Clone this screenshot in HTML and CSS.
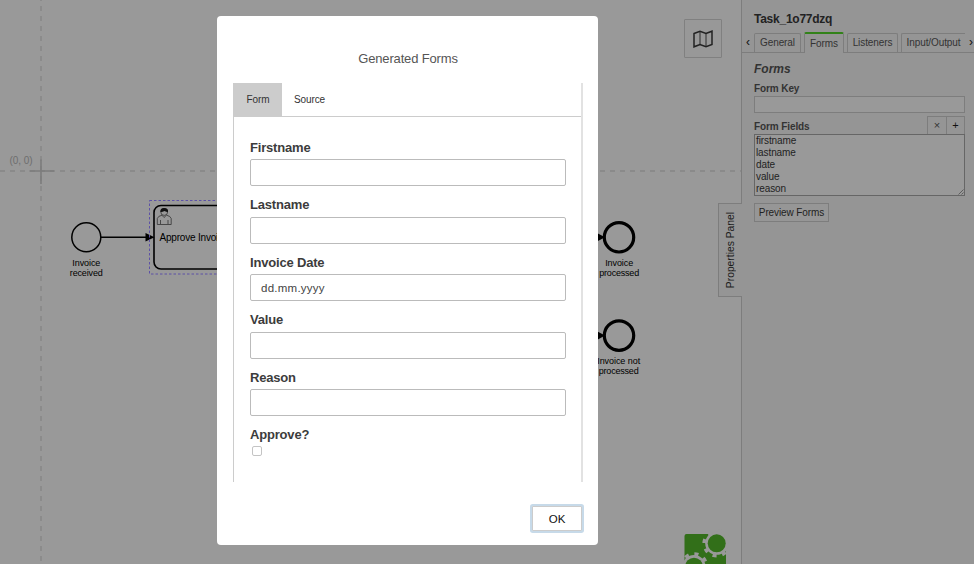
FILE: index.html
```html
<!DOCTYPE html>
<html lang="en">
<head>
<meta charset="utf-8">
<title>Generated Forms</title>
<link rel="stylesheet" href="styles.css">
</head>
<body>
<div class="app">
  <main class="canvas">
    <svg class="diagram" width="741" height="564" viewBox="0 0 741 564">
      <g class="origin">
        <path class="axis" d="M0 171H741" stroke-dasharray="5 5"/>
        <path class="axis" d="M41 0V564" stroke-dasharray="5 5" stroke-dashoffset="4"/>
        <path class="cross" d="M29.500 171H54M41 159.500V184"/>
        <text class="origin-label" x="9.500" y="164" textLength="23">(0, 0)</text>
      </g>
      <circle class="start" cx="86.300" cy="237.300" r="14.500"/>
      <path class="flow" d="M101 237.300H147"/>
      <path class="arrow" d="M145.500 233L154.500 237.300L145.500 241.600Z"/>
      <g class="label">
        <text x="86.300" y="265.500" textLength="28">Invoice</text>
        <text x="86.300" y="275.500" textLength="33">received</text>
      </g>
      <rect class="selection" x="149.500" y="200.500" width="107" height="73.500"/>
      <rect class="task" x="154" y="205.500" width="98" height="63.500" rx="7"/>
      <g class="user">
        <path d="M157.300 224.500V218.500Q158 216 162 215.200L164 217.500L166.500 215.200Q170.500 216 171.200 218.500V224.500ZM160.500 220V224M168 220V224"/>
        <circle cx="164.200" cy="212" r="3.400"/>
        <path class="hair" d="M160.400 212Q160 208 164 208Q168.600 208 168 212Q166 211.800 164.500 211Q162.500 212.200 160.400 212Z"/>
      </g>
      <text class="task-label" x="159.500" y="240.500" textLength="69">Approve Invoice</text>
      <path class="arrow" d="M597 233L605 237.300L597 241.600ZM597 331.300L605 335.600L597 339.900Z"/>
      <circle class="end" cx="619" cy="237.300" r="14.700"/>
      <circle class="end" cx="619" cy="335.600" r="14.700"/>
      <g class="label">
        <text x="619.200" y="265.500" textLength="28">Invoice</text>
        <text x="619.200" y="275.500" textLength="40">processed</text>
        <text x="618.700" y="363.500" textLength="43">Invoice not</text>
        <text x="618.700" y="373.600" textLength="40">processed</text>
      </g>
      <g class="logo">
        <path d="M684.500 536Q684.500 534 686.500 534H708.500V543L716 552L726 551.500V564H684.500Z"/>
        <circle class="gap" cx="716.700" cy="543.300" r="11.500"/>
        <circle class="teeth" cx="716.700" cy="543.300" r="12.300" stroke-dasharray="4 5.660"/>
        <circle class="gap" cx="694" cy="566.500" r="11.500"/>
        <circle class="teeth" cx="694" cy="566.500" r="12.300" stroke-dasharray="4 5.660"/>
        <circle cx="716.700" cy="543.300" r="9"/>
        <circle cx="694" cy="566.500" r="8.800"/>
      </g>
    </svg>
    <button class="minimap">
      <svg width="20" height="18" viewBox="0 0 20 18"><path d="M1 3.500L7 1.200L13 3.500L19 1.200V14.500L13 16.800L7 14.500L1 16.800Z"/><path class="fold" d="M7 1.200V14.500M13 3.500V16.800"/></svg>
    </button>
    <div class="toggle"><span>Properties Panel</span></div>
  </main>
  <aside class="panel">
    <h1>Task_1o77dzq</h1>
    <nav class="tabs">
      <span class="chevron">‹</span>
      <a class="tab general">General</a>
      <a class="tab forms active">Forms</a>
      <a class="tab listeners">Listeners</a>
      <a class="tab io">Input/Output</a>
      <span class="chevron next">›</span>
    </nav>
    <section class="group">
      <h2>Forms</h2>
      <label class="key-label">Form Key</label>
      <div class="key"></div>
      <div class="fields-head"><label>Form Fields</label><span class="tool">×</span><span class="tool plus">+</span></div>
      <div class="fields">
        <div>firstname</div><div>lastname</div><div>date</div><div>value</div><div>reason</div>
        <svg class="grip" width="6" height="6" viewBox="0 0 6 6"><path d="M0.500 5.500L5.500 0.500M3.500 5.500L5.500 3.500"/></svg>
      </div>
      <button class="preview">Preview Forms</button>
    </section>
  </aside>
</div>
<div class="overlay">
  <div class="modal">
    <h3>Generated Forms</h3>
    <div class="content">
      <div class="modal-tabs"><a class="current">Form</a><a>Source</a></div>
      <form>
        <div class="row"><label>Firstname</label><div class="input"></div></div>
        <div class="row"><label>Lastname</label><div class="input"></div></div>
        <div class="row"><label>Invoice Date</label><div class="input">dd.mm.yyyy</div></div>
        <div class="row"><label>Value</label><div class="input"></div></div>
        <div class="row"><label>Reason</label><div class="input"></div></div>
        <div class="row"><label>Approve?</label><div class="check"></div></div>
      </form>
    </div>
    <button class="ok">OK</button>
  </div>
</div>
</body>
</html>
```
FILE: styles.css
```css
* { box-sizing: border-box; }
body { margin: 0; overflow: hidden; font-family: "Liberation Sans", Arial, sans-serif; }
h1, h2, h3 { margin: 0; }
button { font-family: inherit; padding: 0; }

.app { display: flex; width: 974px; height: 564px; background: #999; }
.canvas { position: relative; width: 741px; height: 564px; }
.diagram { display: block; }
.axis { stroke: #858585; stroke-width: 1.4; fill: none; }
.cross { stroke: #7c7c7c; stroke-width: 1.6; fill: none; }
.origin-label { font-size: 10px; fill: #6e6e6e; }
.start { fill: none; stroke: #000; stroke-width: 1.5; }
.end { fill: none; stroke: #000; stroke-width: 3.2; }
.flow { stroke: #000; stroke-width: 1.5; }
.arrow { fill: #000; }
.label { font-size: 9px; fill: #000; text-anchor: middle; }
.selection { fill: none; stroke: #5c51a6; stroke-width: 1; stroke-dasharray: 2.500 2; }
.task { fill: none; stroke: #000; stroke-width: 1.6; }
.task-label { font-size: 10px; }
.user { fill: none; stroke: #333; stroke-width: .8; }
.user .hair { fill: #111; stroke: none; }
.logo { fill: #326f19; }
.logo .gap { fill: #999; }
.logo .teeth { fill: none; stroke: #999; stroke-width: 4; }
.minimap {
  position: absolute; left: 684px; top: 19px; width: 38px; height: 39px;
  display: flex; align-items: center; justify-content: center;
  background: #989898; border: 1px solid #808080; border-radius: 1px;
}
.minimap svg { fill: none; stroke: #222; stroke-width: 1.5; }
.minimap .fold { stroke-width: .9; }
.toggle {
  position: absolute; left: 718px; top: 203px; width: 24px; height: 94px;
  display: flex; align-items: center; justify-content: center;
  background: #959595; border: 1px solid #7d7d7d; border-right: 0;
  font-size: 10.300px; color: #1c1c1c;
}
.toggle span { writing-mode: vertical-rl; transform: rotate(180deg); white-space: nowrap; }

.panel { width: 233px; background: #959595; border-left: 1px solid #7d7d7d; color: #333; overflow: hidden; }
.panel h1 { margin: 11px 0 0 12px; font-size: 12px; letter-spacing: -.25px; line-height: 16px; color: #222; }
.tabs { display: flex; align-items: flex-end; height: 20px; margin-top: 6px; border-bottom: 1px solid #7d7d7d; font-size: 10px; letter-spacing: -.1px; }
.chevron { width: 12px; height: 19px; line-height: 18px; font-size: 12px; text-align: center; color: #111; flex: none; }
.chevron.next { width: 8px; }
.tab { height: 19px; border: 1px solid #7d7d7d; border-bottom: 0; border-radius: 2px 2px 0 0; line-height: 18px; text-align: center; margin-right: 3px; flex: none; white-space: nowrap; }
.general { width: 47px; }
.forms { width: 40px; }
.listeners { width: 51px; }
.io { width: 64px; border-right: 0; border-radius: 2px 0 0 0; margin-right: 2px; }
.tab.active { height: 21px; line-height: 19px; margin-bottom: -1px; background: #959595; border-top: 2px solid #328219; }
.group { padding: 8px 9px 0 12px; }
.group h2 { font-size: 12px; font-style: italic; line-height: 16px; }
.group label { font-size: 10px; letter-spacing: -.1px; font-weight: bold; }
.key-label { display: block; line-height: 13px; margin: 5px 0 1px; }
.key { height: 17px; border: 1px solid #7d7d7d; background: #999; }
.fields-head { display: flex; height: 18px; margin-top: 3px; }
.fields-head label { flex: 1; line-height: 21px; }
.tool { width: 19px; border: 1px solid #7d7d7d; border-width: 1px 0 0 1px; font-size: 11px; line-height: 16px; text-align: center; }
.tool.plus { border-right-width: 1px; color: #111; }
.fields { position: relative; height: 62px; border: 1px solid #666; padding: 0 1px; background: #999; font-size: 10px; letter-spacing: -.1px; line-height: 12px; color: #222; }
.grip { position: absolute; right: 0; bottom: 0; fill: none; stroke: #444; stroke-width: .7; }
.preview { display: block; width: 75px; height: 19px; margin-top: 7px; border: 1px solid #7d7d7d; background: #969696; color: #222; font-size: 10px; letter-spacing: -.1px; white-space: nowrap; }

.overlay { position: fixed; inset: 0; padding: 16px 0 0 217px; }
.modal { width: 381px; height: 529px; padding: 34px 15px 0 16px; background: #fff; border-radius: 4px; display: flex; flex-direction: column; }
.modal h3 { font-size: 13px; letter-spacing: -.15px; font-weight: normal; line-height: 17px; color: #555; text-align: center; }
.content { height: 399px; margin-top: 16px; border-left: 1px solid #ccc; border-right: 2px solid #e2e2e2; }
.modal-tabs { display: flex; height: 34px; border-bottom: 1px solid #ccc; font-size: 10px; letter-spacing: -.1px; line-height: 33px; color: #333; }
.modal-tabs a { padding: 0 12px; }
.modal-tabs .current { width: 48px; padding: 0; text-align: center; background: #ccc; }
form { padding: 22.500px 15px 0 16px; }
.row { height: 57.500px; color: #3c3c3c; }
.row label { display: block; font-size: 13px; letter-spacing: -.18px; font-weight: bold; line-height: 16px; }
.input { height: 27px; margin-top: 3.500px; border: 1px solid #bbb; border-radius: 2px; padding-left: 10px; font-size: 11.500px; letter-spacing: .25px; line-height: 26px; color: #444; }
.check { width: 10px; height: 10px; margin: 3px 0 0 2px; border: 1px solid #c4c4c4; border-radius: 2px; }
.ok { align-self: flex-end; width: 50px; height: 25px; margin: 24px 1px 0 0; border: 1px solid #ccc; background: #fff; box-shadow: 0 0 0 2px #c7dae9; border-radius: 1px; font-size: 11.500px; line-height: 22px; color: #111; }
```
